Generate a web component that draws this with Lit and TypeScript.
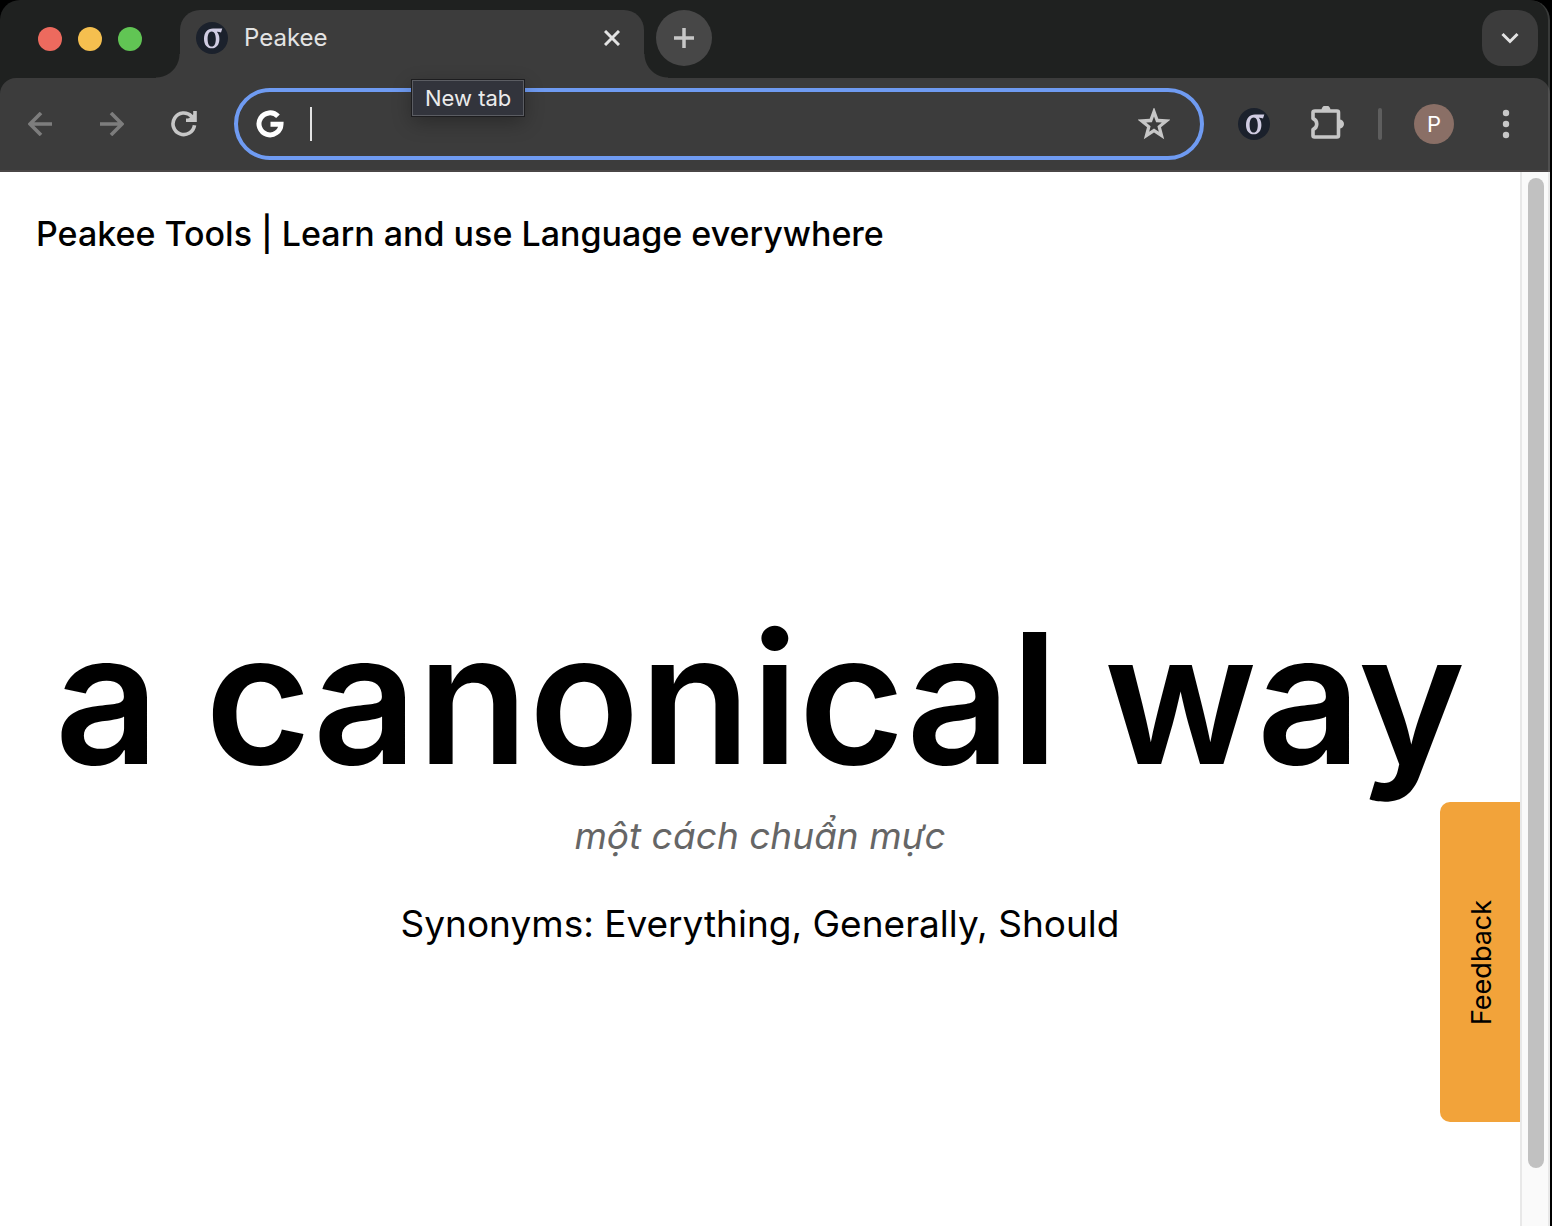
import { LitElement, html, css, svg } from "lit";
import { customElement } from "lit/decorators.js";

const sigma = svg`
  <circle cx="16" cy="16" r="16" fill="#1b212c"/>
  <path fill-rule="evenodd" fill="#d0cce2" d="M8 17C8 10.500 11.500 6.500 17 6.500H26.300L25 10.600C23.500 9.900 22 9.700 20.800 9.800C22.600 11.600 23.400 14 23.400 17C23.400 22.600 20.400 26.300 15.700 26.300C11 26.300 8 22.600 8 17ZM11.600 17C11.600 21.500 13 24.600 15.700 24.600C18.400 24.600 19.800 21.500 19.800 17C19.800 12.500 18.400 9.400 15.700 9.400C13 9.400 11.600 12.500 11.600 17Z"/>`;

@customElement("app-root")
export class AppRoot extends LitElement {
  static styles = css`
    :host {
      display: block;
      background: #000;
      font-family: Inter, "Liberation Sans", sans-serif;
      color: #000;
    }
    * { box-sizing: border-box; }
    button { border: 0; padding: 0; background: none; font: inherit; color: inherit; display: grid; place-items: center; flex: none; }
    svg { display: block; }
    .window {
      display: flex;
      flex-direction: column;
      min-height: 100vh;
      margin-right: 2px;
      background: #1f2120;
      border-radius: 20px 20px 0 0;
      overflow: hidden;
      position: relative;
    }
    .window::after {
      content: "";
      position: absolute;
      inset: 0;
      border-right: 2px solid rgba(160, 160, 160, 0.2);
      border-radius: 20px 20px 0 0;
      pointer-events: none;
    }
    .strip { display: flex; height: 78px; padding: 10px 12px 0 38px; align-items: flex-start; }
    .lights { display: flex; gap: 16px; padding-top: 17px; width: 142px; flex: none; }
    .light { width: 24px; height: 24px; border-radius: 50%; }
    .red { background: #ed6a5e; }
    .yellow { background: #f5bf4f; }
    .green { background: #61c554; }
    .tab {
      display: flex;
      align-items: center;
      width: 464px;
      height: 68px;
      padding: 0 16px 12px;
      gap: 16px;
      background: #3c3c3c;
      border-radius: 20px 20px 0 0;
      color: #e3e3e3;
      font-size: 24px;
      line-height: 32px;
      position: relative;
    }
    .tab::before, .tab::after { content: ""; position: absolute; bottom: 0; width: 24px; height: 24px; }
    .tab::before { right: 100%; background: radial-gradient(circle at 0 0, transparent 23px, #3c3c3c 24px); }
    .tab::after { left: 100%; background: radial-gradient(circle at 100% 0, transparent 23px, #3c3c3c 24px); }
    .name { flex: 1; }
    .close { width: 32px; height: 32px; }
    .plus { width: 56px; height: 56px; border-radius: 50%; background: #474747; margin-left: 12px; }
    .more { width: 56px; height: 56px; border-radius: 20px; background: #3c3c3c; margin-left: auto; }
    .toolbar {
      display: flex;
      align-items: center;
      height: 94px;
      padding: 0 24px 0 20px;
      background: #3c3c3c;
      border-bottom: 2px solid #4a4646;
      border-radius: 16px 16px 0 0;
    }
    .nav { display: flex; gap: 32px; margin-right: 30px; }
    .nav button { width: 40px; height: 40px; }
    .omni {
      flex: 1;
      display: flex;
      align-items: center;
      height: 72px;
      border: 4px solid #6f9bf2;
      border-radius: 36px;
      padding: 0 30px 0 18px;
    }
    .caret { width: 2px; height: 34px; margin: 0 8px 0 26px; background: #e3e3e3; }
    .omni input { flex: 1; min-width: 0; border: 0; outline: 0; background: none; color: #e3e3e3; font: inherit; font-size: 26px; }
    .tools { display: flex; align-items: center; margin-left: 34px; gap: 32px; }
    .divider { width: 4px; height: 32px; border-radius: 2px; background: #5e5e5e; }
    .avatar { width: 40px; height: 40px; border-radius: 50%; background: #8a6f66; color: #fff; font-size: 22px; line-height: 40px; }
    .tip {
      position: absolute;
      left: 412px;
      top: 80px;
      padding: 0 12px;
      border: 1px solid #5b5d63;
      outline: 1px solid #1d1d1f;
      background: #32343c;
      color: #ebebeb;
      font-size: 22px;
      line-height: 34px;
      box-shadow: 0 6px 20px rgba(0, 0, 0, 0.3);
    }
    .view { flex: 1; display: flex; position: relative; background: #fff; }
    .page { flex: 1; min-width: 0; padding: 38px 36px; }
    .title { margin: 0; font-size: 34px; font-weight: 500; line-height: 48px; }
    .hero { margin: 344px -36px 0; text-align: center; }
    .hero p { margin: 0; }
    .word { margin: 0; font-size: 182px; line-height: 192px; font-weight: 600; white-space: nowrap; }
    .hero .meaning { margin-top: 18px; font-size: 37px; line-height: 48px; font-style: italic; color: #666; }
    .hero .syn { margin-top: 40px; font-size: 37px; line-height: 48px; }
    .feedback {
      position: absolute;
      right: 30px;
      top: 630px;
      width: 80px;
      height: 320px;
      padding-right: 4px;
      background: #f2a33a;
      border-radius: 0 10px 10px 0;
      writing-mode: vertical-rl;
      transform: rotate(180deg);
      font-size: 27px;
      line-height: 32px;
    }
    .scroll { width: 30px; padding: 6px 6px 58px; border-left: 2px solid #e8e8e8; background: #fafafa; display: flex; }
    .thumb { width: 16px; border-radius: 8px; background: #c1c1c1; }
  `;

  render() {
    return html`
      <div class="window">
        <header class="strip">
          <div class="lights">
            <span class="light red"></span><span class="light yellow"></span><span class="light green"></span>
          </div>
          <div class="tab">
            <svg width="32" height="32">${sigma}</svg>
            <span class="name">Peakee</span>
            <button class="close" aria-label="Close tab">
              <svg width="16" height="16"><path d="M1 1L15 15M15 1L1 15" stroke="#e3e3e3" stroke-width="3"/></svg>
            </button>
          </div>
          <button class="plus" aria-label="New tab">
            <svg width="20" height="20"><path d="M10 0V20M0 10H20" stroke="#c7c7c7" stroke-width="3.500"/></svg>
          </button>
          <button class="more" aria-label="Search tabs">
            <svg width="18" height="12"><path d="M1.500 2L9 9.500L16.500 2" fill="none" stroke="#e3e3e3" stroke-width="3"/></svg>
          </button>
        </header>
        <div class="toolbar">
          <nav class="nav">
            <button aria-label="Back">
              <svg width="24" height="24" fill="none" stroke="#7d7d7d" stroke-width="3.600"><path d="M24 12H2M13 1L2 12L13 23"/></svg>
            </button>
            <button aria-label="Forward">
              <svg width="24" height="24" fill="none" stroke="#7d7d7d" stroke-width="3.600"><path d="M0 12H22M11 1L22 12L11 23"/></svg>
            </button>
            <button aria-label="Reload">
              <svg width="28" height="28" fill="none" stroke="#c7c7c7" stroke-width="3.600"><path d="M24.500 15.300A10.800 10.800 0 1 1 21.500 6.200L24 9M25 1V10.200H16"/><path d="M24 4L25 9H18Z" fill="#c7c7c7" stroke="none"/></svg>
            </button>
          </nav>
          <label class="omni">
            <svg width="28" height="28" viewBox="0 0 28 28" fill="none" stroke="#fff" stroke-width="5"><path d="M22 6.300A11 11 0 1 0 25 14.300H14.500"/></svg>
            <span class="caret"></span>
            <input type="text" aria-label="Address and search bar" />
            <button aria-label="Bookmark this tab">
              <svg width="32" height="32" viewBox="0 0 32 32"><path fill-rule="evenodd" d="M16 -1L20.300 10.700L32.500 11.500L23 19.200L26.200 31.200L16 24.600L5.800 31.200L9 19.200L-0.500 11.500L11.700 10.700ZM16 8.500L13.900 14.200L8.200 14.600L12.600 18.200L11.200 23.700L16 20.600L20.800 23.700L19.400 18.200L23.800 14.600L18.100 14.200Z" fill="#c7c7c7"/></svg>
            </button>
          </label>
          <div class="tools">
            <button aria-label="Peakee"><svg width="32" height="32">${sigma}</svg></button>
            <button aria-label="Extensions">
              <svg width="44" height="36" viewBox="-2 1 44 36">
                <path d="M11 6H33Q34.500 6 34.500 7.500V30.500Q34.500 32 33 32H10.500Q9 32 9 30.500V24.500C14 22.500 14 15.500 9 13.500V7.500Q9 6 11 6Z" fill="none" stroke="#c7c7c7" stroke-width="3.600" stroke-linejoin="round"/>
                <path d="M17.500 5a4.500 4.500 0 0 1 9 0ZM35.500 14.500a4.500 4.500 0 0 1 0 9Z" fill="#c7c7c7"/>
              </svg>
            </button>
            <span class="divider"></span>
            <button class="avatar" aria-label="Profile">P</button>
            <button aria-label="Menu">
              <svg width="40" height="32" fill="#c7c7c7"><circle cx="20" cy="5" r="3.200"/><circle cx="20" cy="16" r="3.200"/><circle cx="20" cy="27" r="3.200"/></svg>
            </button>
          </div>
        </div>
        <div class="tip" role="tooltip">New tab</div>
        <main class="view">
          <div class="page">
            <h2 class="title">Peakee Tools | Learn and use Language everywhere</h2>
            <section class="hero">
              <h1 class="word">a canonical way</h1>
              <p class="meaning" lang="vi">một cách chuẩn mực</p>
              <p class="syn">Synonyms: Everything, Generally, Should</p>
            </section>
          </div>
          <button class="feedback">Feedback</button>
          <div class="scroll"><div class="thumb"></div></div>
        </main>
      </div>
    `;
  }
}
